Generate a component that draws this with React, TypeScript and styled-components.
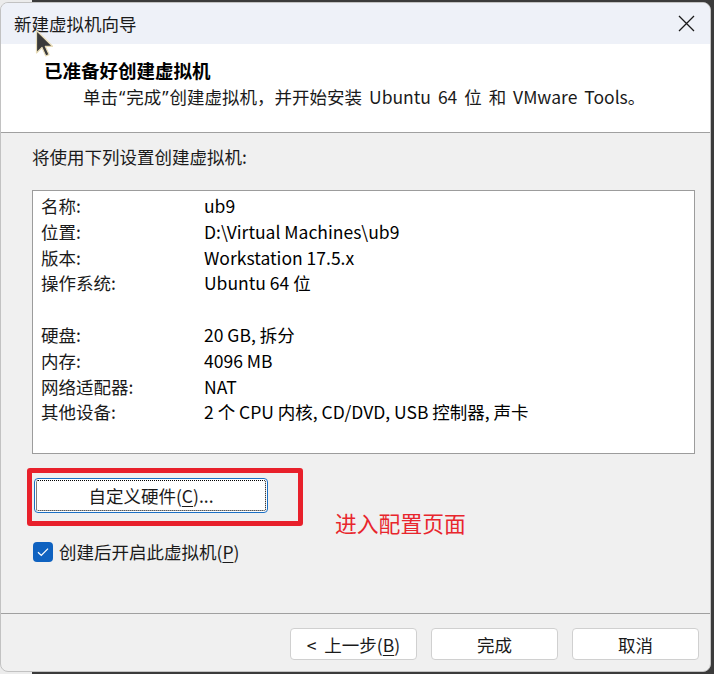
import styled, { createGlobalStyle } from "styled-components";

const GlobalStyle = createGlobalStyle`
  html, body {
    margin: 0;
    padding: 0;
  }
  body {
    width: 714px;
    height: 674px;
    overflow: hidden;
    padding-top: 2px;
    box-sizing: border-box;
    background: linear-gradient(to right, #ececec 0 32px, #3b3b3b 32px);
    font-family: "Segoe UI", "Noto Sans CJK SC", "Noto Sans", sans-serif;
  }
`;

const Window = styled.div`
  position: relative;
  width: 711px;
  height: 670px;
  box-sizing: border-box;
  border: 1px solid #c2c2c2;
  border-radius: 8px;
  overflow: hidden;
  display: flex;
  flex-direction: column;
  background: #f0f0f0;
  color: #000;
`;

const TitleBar = styled.div`
  height: 41px;
  flex-shrink: 0;
  display: flex;
  align-items: center;
  justify-content: space-between;
  padding: 0 14px 0 13px;
  background: #eef1f8;
`;

const Title = styled.div`
  font-size: 17.5px;
  color: #1a1a1a;
`;

const CloseBtn = styled.div`
  width: 18px;
  height: 18px;
  display: flex;
  align-items: center;
  justify-content: center;
  margin-right: 1px;
`;

const Header = styled.div`
  height: 89px;
  flex-shrink: 0;
  background: #fff;
  border-bottom: 1px solid #a0a0a0;
  box-sizing: border-box;
  padding: 13px 0 0 43px;
`;

const HeaderTitle = styled.div`
  font-size: 18.5px;
  font-weight: 700;
  line-height: 26px;
`;

const HeaderSub = styled.div`
  font-size: 17.5px;
  line-height: 28px;
  padding-left: 39px;
  color: #1a1a1a;
  word-spacing: 3px;
`;

const Quote = styled.span`
  font-family: "Noto Sans", sans-serif;
  margin: 0 1px;
`;

const Body = styled.div`
  flex: 1;
  padding: 11px 15px 0 31px;
  font-size: 17.5px;
`;

const Intro = styled.div`
  line-height: 26px;
  color: #1a1a1a;
`;

const ListBox = styled.div`
  margin-top: 20px;
  height: 264px;
  box-sizing: border-box;
  border: 1px solid #9c9c9c;
  background: #fff;
  padding: 2px 8px;
`;

const Row = styled.div`
  display: grid;
  grid-template-columns: 163px 1fr;
  height: 25.8px;
  line-height: 25.8px;
  white-space: nowrap;
`;

const Label = styled.span`
  color: #1a1a1a;
`;

const Value = styled.span``;

const HardwareRow = styled.div`
  position: relative;
  margin-top: 24px;
  margin-left: 2px;
  width: 234px;
`;

const DialogButton = styled.div<{ $focused?: boolean }>`
  box-sizing: border-box;
  display: flex;
  align-items: center;
  justify-content: center;
  background: #fff;
  border: 1px solid ${(p) => (p.$focused ? "#1a6fc4" : "#d0d0d0")};
  border-radius: 4px;
  font-size: 17.5px;
  color: #1a1a1a;
  outline: ${(p) => (p.$focused ? "1px dotted #000" : "none")};
  outline-offset: -3px;
  white-space: pre;
`;

const HardwareButton = styled(DialogButton)`
  width: 234px;
  height: 35px;
`;

const RedBox = styled.div`
  position: absolute;
  left: -7px;
  top: -10px;
  width: 276px;
  height: 58px;
  box-sizing: border-box;
  border: 5px solid #e8202b;
  border-radius: 3px;
  pointer-events: none;
`;

const RedNote = styled.div`
  position: absolute;
  left: 301px;
  top: 32px;
  font-size: 21.8px;
  line-height: 26px;
  color: #e8262d;
  white-space: nowrap;
`;

const CheckRow = styled.label`
  display: flex;
  align-items: center;
  gap: 6px;
  margin-top: 28px;
  margin-left: 1px;
  line-height: 22px;
`;

const CheckBox = styled.span`
  width: 20px;
  height: 20px;
  border-radius: 4px;
  background: #0f62c0;
  display: flex;
  align-items: center;
  justify-content: center;
`;

const CheckText = styled.span`
  color: #1a1a1a;
`;

const Accel = styled.span`
  text-decoration: underline;
  text-underline-offset: 3px;
`;

const Footer = styled.div`
  height: 58px;
  flex-shrink: 0;
  border-top: 1px solid #a0a0a0;
  box-sizing: border-box;
  display: flex;
  justify-content: flex-end;
  align-items: flex-start;
  gap: 14px;
  padding: 14px 11px 0 0;
`;

const FooterButton = styled(DialogButton)`
  width: 127px;
  height: 32px;
`;

const Cursor = styled.svg`
  position: absolute;
  left: 34px;
  top: 26px;
`;

const rows: [string, string][] = [
  ["名称:", "ub9"],
  ["位置:", "D:\\Virtual Machines\\ub9"],
  ["版本:", "Workstation 17.5.x"],
  ["操作系统:", "Ubuntu 64 位"],
  ["", ""],
  ["硬盘:", "20 GB, 拆分"],
  ["内存:", "4096 MB"],
  ["网络适配器:", "NAT"],
  ["其他设备:", "2 个 CPU 内核, CD/DVD, USB 控制器, 声卡"],
];

export default function App() {
  return (
    <>
      <GlobalStyle />
      <Window>
        <TitleBar>
          <Title>新建虚拟机向导</Title>
          <CloseBtn>
            <svg width="17" height="17" viewBox="0 0 17 17">
              <path d="M1 1 L16 16 M16 1 L1 16" stroke="#1a1a1a" strokeWidth="1.3" fill="none" />
            </svg>
          </CloseBtn>
        </TitleBar>
        <Header>
          <HeaderTitle>已准备好创建虚拟机</HeaderTitle>
          <HeaderSub>
            单击<Quote>“</Quote>完成<Quote>”</Quote>创建虚拟机，并开始安装 Ubuntu 64 位 和 VMware Tools。
          </HeaderSub>
        </Header>
        <Body>
          <Intro>将使用下列设置创建虚拟机:</Intro>
          <ListBox>
            {rows.map(([l, v], i) => (
              <Row key={i}>
                <Label>{l}</Label>
                <Value>{v}</Value>
              </Row>
            ))}
          </ListBox>
          <HardwareRow>
            <HardwareButton $focused>
              <span>
                自定义硬件(<Accel>C</Accel>)...
              </span>
            </HardwareButton>
            <RedBox />
            <RedNote>进入配置页面</RedNote>
          </HardwareRow>
          <CheckRow>
            <CheckBox>
              <svg width="12" height="10" viewBox="0 0 12 10">
                <path d="M1 5.2 L4.3 8.4 L11 1.6" stroke="#fff" strokeWidth="1.3" fill="none" />
              </svg>
            </CheckBox>
            <CheckText>
              创建后开启此虚拟机(<Accel>P</Accel>)
            </CheckText>
          </CheckRow>
        </Body>
        <Footer>
          <FooterButton>
            <span>
              {"<  "}上一步(<Accel>B</Accel>)
            </span>
          </FooterButton>
          <FooterButton>完成</FooterButton>
          <FooterButton>取消</FooterButton>
        </Footer>
        <Cursor width="20" height="30" viewBox="0 0 20 30">
          <path
            d="M1.5 1.5 L1.5 24 L7 18.5 L10.8 27 L14 25.6 L10.3 17.3 L17.5 17.3 Z"
            fill="#3a3a3a"
            stroke="#e8dcb8"
            strokeWidth="1.2"
            strokeLinejoin="round"
          />
        </Cursor>
      </Window>
    </>
  );
}
